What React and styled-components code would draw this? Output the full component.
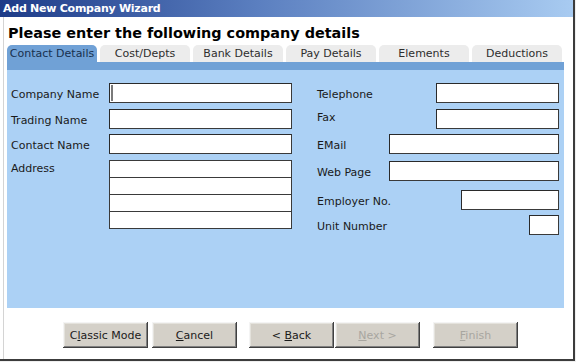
import styled, { createGlobalStyle } from "styled-components";

const GlobalStyle = createGlobalStyle`
  html, body {
    margin: 0;
    padding: 0;
    background: #efefef;
  }
  * {
    box-sizing: border-box;
  }
`;

const tabs = [
  "Contact Details",
  "Cost/Depts",
  "Bank Details",
  "Pay Details",
  "Elements",
  "Deductions",
];

export default function App() {
  return (
    <>
      <GlobalStyle />
      <Window>
        <TitleBar>Add New Company Wizard</TitleBar>
        <Body>
          <Heading>Please enter the following company details</Heading>
          <TabRow>
            {tabs.map((t, i) => (
              <Tab key={t} $active={i === 0}>
                {t}
              </Tab>
            ))}
          </TabRow>
          <Strip />
          <Panel>
            <Column $width={281}>
              <Row>
                <Label>Company Name</Label>
                <Field $width={183} $caret />
              </Row>
              <Row $mt={6}>
                <Label>Trading Name</Label>
                <Field $width={183} />
              </Row>
              <Row $mt={5}>
                <Label>Contact Name</Label>
                <Field $width={183} />
              </Row>
              <Row $mt={6} $top>
                <Label $top>Address</Label>
                <AddressStack>
                  <AddressLine />
                  <AddressLine />
                  <AddressLine />
                  <AddressLine />
                </AddressStack>
              </Row>
            </Column>
            <Column $width={242}>
              <Row>
                <Label>Telephone</Label>
                <Field $width={123} />
              </Row>
              <Row $mt={6} $top>
                <Label $top>Fax</Label>
                <Field $width={123} />
              </Row>
              <Row $mt={5}>
                <Label>EMail</Label>
                <Field $width={170} />
              </Row>
              <Row $mt={6} $h={21}>
                <Label>Web Page</Label>
                <Field $width={170} />
              </Row>
              <Row $mt={9}>
                <Label>Employer No.</Label>
                <Field $width={98} />
              </Row>
              <Row $mt={5}>
                <Label>Unit Number</Label>
                <Field $width={30} />
              </Row>
            </Column>
          </Panel>
          <ButtonBar>
            <Button>
              C<u>l</u>assic Mode
            </Button>
            <Button $ml={4}>
              <u>C</u>ancel
            </Button>
            <Button $ml={12}>
              &lt; <u>B</u>ack
            </Button>
            <Button $ml={1} disabled>
              <u>N</u>ext &gt;
            </Button>
            <Button $ml={13} disabled>
              <u>F</u>inish
            </Button>
          </ButtonBar>
        </Body>
      </Window>
    </>
  );
}

const Window = styled.div`
  width: 575px;
  height: 361px;
  background: #ffffff;
  border-right: 2px solid #3c3c3c;
  border-bottom: 2px solid #3c3c3c;
  display: flex;
  flex-direction: column;
  font-family: "DejaVu Sans", Verdana, sans-serif;
`;

const TitleBar = styled.div`
  height: 17px;
  padding: 1px 0 0 3px;
  background: linear-gradient(to right, #1d3b88, #5b7fc0 45%, #a8cbf1);
  color: #ffffff;
  font-size: 11px;
  font-weight: bold;
  letter-spacing: -0.25px;
  line-height: 15px;
  white-space: nowrap;
`;

const Body = styled.div`
  flex: 1;
  display: flex;
  flex-direction: column;
  padding: 8px 0 0 7px;
  box-shadow: inset 3px 0 #ffffff, inset 4px 0 #d4d4d4;
`;

const Heading = styled.h1`
  margin: 0 0 3px 1px;
  font-size: 14.4px;
  line-height: 17px;
  font-weight: bold;
  color: #000000;
`;

const TabRow = styled.div`
  display: flex;
  gap: 3px;
  height: 17px;
`;

const Tab = styled.div`
  width: 90px;
  height: 17px;
  border-radius: 5px 5px 0 0;
  background: ${(p) => (p.$active ? "#70a1d6" : "#ececec")};
  color: ${(p) => (p.$active ? "#17304f" : "#2e2e2e")};
  font-size: 11px;
  line-height: 18px;
  text-align: center;
  white-space: nowrap;
`;

const Strip = styled.div`
  width: 557px;
  height: 8px;
  background: #70a1d6;
`;

const Panel = styled.div`
  width: 557px;
  height: 238px;
  background: #acd1f5;
  padding: 13px 5px 0 4px;
  display: flex;
  justify-content: space-between;
  align-items: flex-start;
`;

const Column = styled.div`
  width: ${(p) => p.$width}px;
  display: flex;
  flex-direction: column;
`;

const Row = styled.div`
  display: flex;
  justify-content: space-between;
  align-items: ${(p) => (p.$top ? "flex-start" : "center")};
  min-height: ${(p) => p.$h || 20}px;
  margin-top: ${(p) => p.$mt || 0}px;
`;

const Label = styled.span`
  font-size: 11px;
  line-height: 13px;
  color: #1a1a1a;
  white-space: nowrap;
  padding-top: ${(p) => (p.$top ? "2px" : "3px")};
`;

const Field = styled.div`
  width: ${(p) => p.$width}px;
  height: 20px;
  background: #ffffff;
  border: 1px solid #3a3a3a;
  border-top-color: #2a2a2a;
  border-left-color: #2a2a2a;
  ${(p) =>
    p.$caret &&
    `background-image: linear-gradient(#7a7a7a, #7a7a7a);
     background-repeat: no-repeat;
     background-position: 1px 1px;
     background-size: 2px 16px;`}
`;

const AddressStack = styled.div`
  display: flex;
  flex-direction: column;
  width: 183px;
`;

const AddressLine = styled.div`
  height: 18px;
  background: #ffffff;
  border: 1px solid #3a3a3a;
  & + & {
    margin-top: -1px;
  }
`;

const ButtonBar = styled.div`
  display: flex;
  padding: 14px 0 0 56px;
`;

const Button = styled.button`
  width: 85px;
  height: 26px;
  margin-left: ${(p) => p.$ml || 0}px;
  padding: 0;
  border: none;
  background: #d4d0c8;
  box-shadow: inset -1px -1px #404040, inset 1px 1px #f4f4f4,
    inset -2px -2px #808080, inset 2px 2px #e4e2dc;
  font-family: "DejaVu Sans", Verdana, sans-serif;
  font-size: 11px;
  color: #1a1a1a;
  &:disabled {
    color: #a8a6a0;
  }
  u {
    text-decoration: underline;
  }
`;
